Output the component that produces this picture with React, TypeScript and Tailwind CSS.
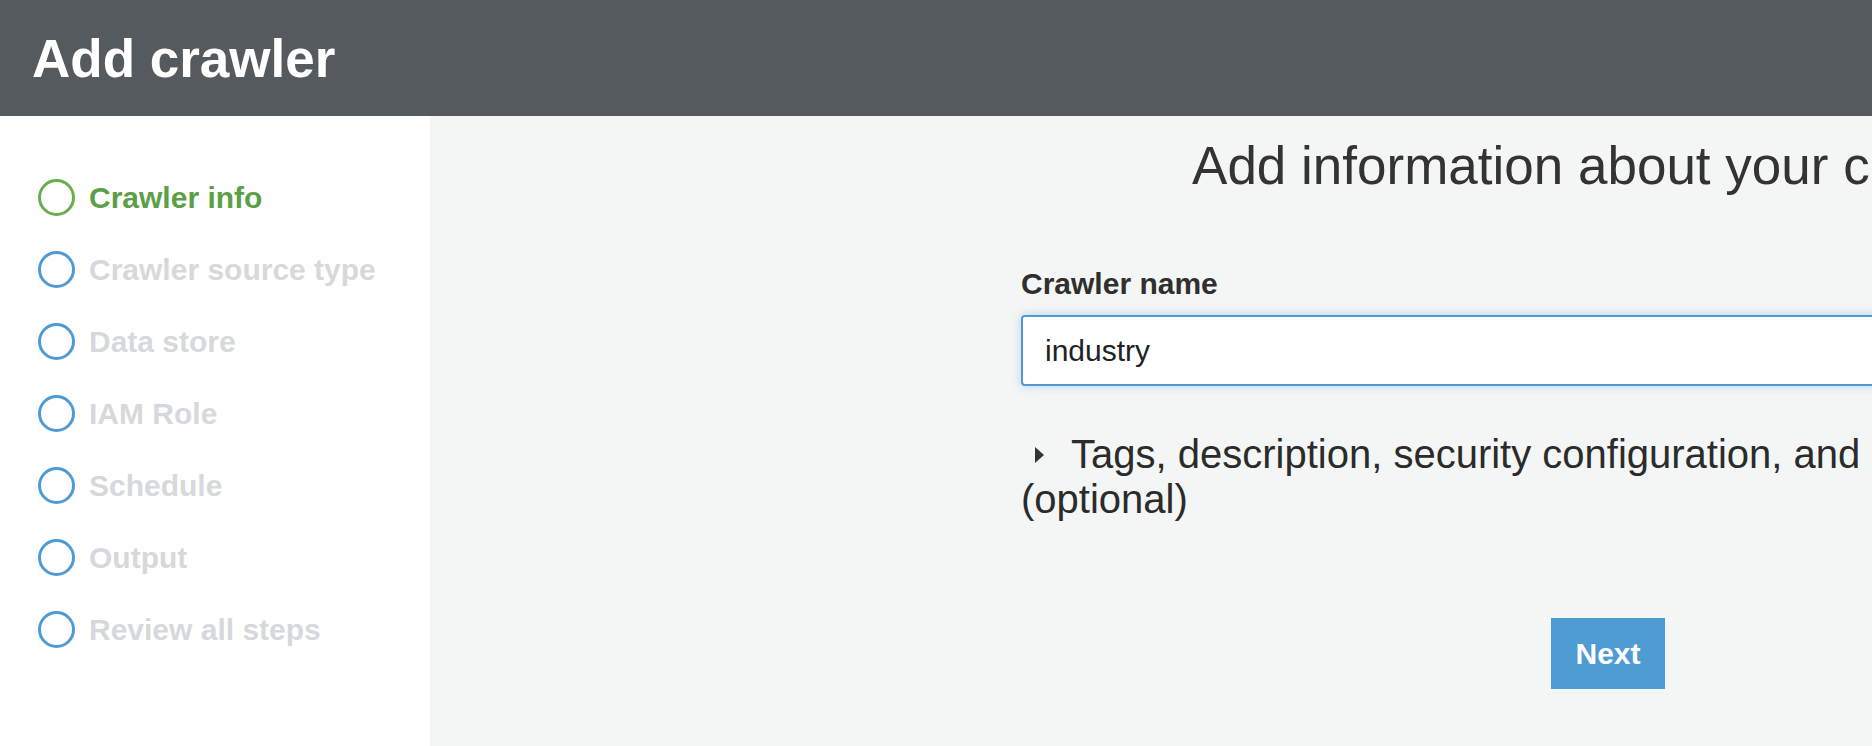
const steps = [
  'Crawler info',
  'Crawler source type',
  'Data store',
  'IAM Role',
  'Schedule',
  'Output',
  'Review all steps',
];

const CaretRight = () => (
  <svg width="11" height="16" viewBox="0 0 11 16" className="inline-block align-[5px]">
    <path d="M1 0 L10 8 L1 16 Z" fill="#333333" />
  </svg>
);

export default function App() {
  return (
    <div
      className="w-full h-[746px] overflow-hidden flex flex-col"
      style={{ fontFamily: '"Liberation Sans", Arial, Helvetica, sans-serif' }}
    >
      <header className="h-[116px] shrink-0 bg-[#545a5e] flex items-center pl-[32px]">
        <h1 className="text-white font-bold text-[53px] leading-none">Add crawler</h1>
      </header>

      <div className="flex flex-1 min-h-0">
        <aside className="w-[430px] shrink-0 bg-white pt-[45px]">
          {steps.map((step, i) => {
            const active = i === 0;
            return (
              <div key={step} className="h-[72px] flex items-center pl-[38px] gap-[14px]">
                <span
                  className={
                    'w-[37px] h-[37px] rounded-full border-[3px] shrink-0 ' +
                    (active ? 'border-[#6aae4f]' : 'border-[#4f9bd6]')
                  }
                />
                <span
                  className={
                    'text-[30px] font-bold whitespace-nowrap ' +
                    (active ? 'text-[#5b9f47]' : 'text-[#d6d9db]')
                  }
                >
                  {step}
                </span>
              </div>
            );
          })}
        </aside>

        <main className="flex-1 bg-[#f4f5f5] pl-[591px] min-w-0">
          <div className="w-[1174px] shrink-0 text-[#333333]">
            <h2 className="mt-[19px] pr-[10px] text-[53px] leading-[61px] text-center font-normal whitespace-nowrap">
              Add information about your crawler
            </h2>

            <label className="block mt-[70px] text-[30px] leading-[35px] font-bold text-[#2f2f2f]">
              Crawler name
            </label>
            <div className="mt-[14px] h-[71px] rounded-[4px] border-2 border-[#4d9ad5] bg-white shadow-[0_0_10px_rgba(77,154,213,0.35)] flex items-center px-[22px]">
              <span className="text-[30px] text-[#222222]">industry</span>
            </div>

            <p className="mt-[46px] text-[40px] leading-[45px] text-[#2b2b2b]">
              <span className="ml-[13px] mr-[26px]">
                <CaretRight />
              </span>
              Tags, description, security configuration, and classifiers (optional)
            </p>

            <div className="mt-[96px] flex justify-center">
              <button
                type="button"
                className="w-[114px] h-[71px] bg-[#4f9bd4] text-white font-bold text-[30px]"
              >
                Next
              </button>
            </div>
          </div>
        </main>
      </div>
    </div>
  );
}
